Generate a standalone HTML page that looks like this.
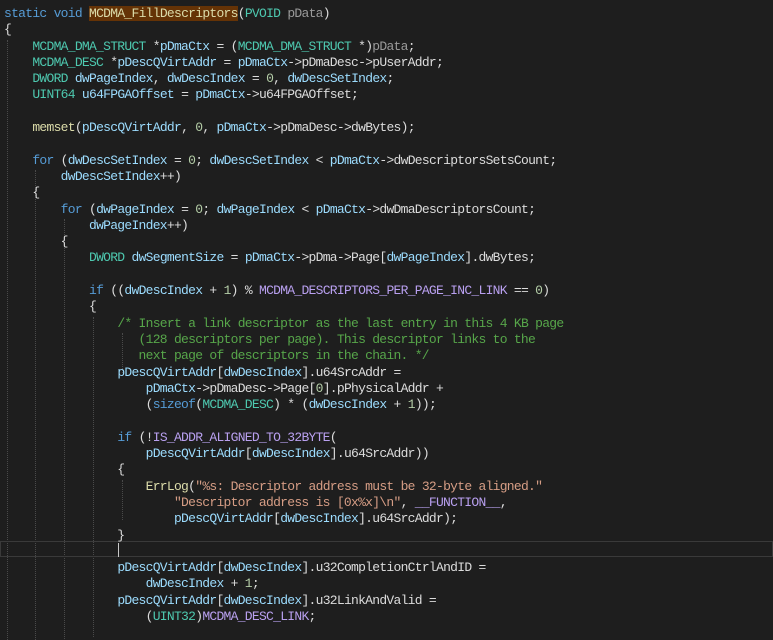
<!DOCTYPE html>
<html><head><meta charset="utf-8"><style>
body{margin:0;background:#1e1e1e;width:773px;height:638px;overflow:hidden;position:relative}
pre{margin:0;padding:6px 0 0 4px;font-family:"Liberation Mono",monospace;font-size:13px;letter-spacing:-0.72px;line-height:16.3px;color:#dcdcdc;white-space:pre;position:relative;z-index:2}
.k{color:#569cd6}.t{color:#4ec9b0}.m{color:#b9a0f0}.v{color:#9cdcfe}.p{color:#9a9a9a}.c{color:#57a64a}.s{color:#d69d85}.f{color:#dcdcaa}.n{color:#b5cea8}.h{background:#653306;color:#dcdcaa}
.g{position:absolute;width:0;border-left:1px dotted #4a4a4a;z-index:1}
.cur{position:absolute;left:0;top:541px;width:773px;height:16px;border:1px solid #3a3a3a;box-sizing:border-box;z-index:1}
.car{position:absolute;left:118px;top:543px;width:1px;height:14px;background:#c8c8c8;z-index:3}
</style></head><body>
<div class="g" style="left:7px;top:40px;height:600px"></div>
<div class="g" style="left:35px;top:170px;height:470px"></div>
<div class="g" style="left:64px;top:219px;height:420px"></div>
<div class="g" style="left:93px;top:317px;height:320px"></div>
<div class="g" style="left:122px;top:333px;height:40px"></div>
<div class="g" style="left:122px;top:480px;height:40px"></div>
<div class="cur"></div><div class="car"></div>
<pre><span class="k">static</span> <span class="k">void</span> <span class="h">MCDMA_FillDescriptors</span>(<span class="t">PVOID</span> <span class="p">pData</span>)
{
    <span class="t">MCDMA_DMA_STRUCT</span> *<span class="v">pDmaCtx</span> = (<span class="t">MCDMA_DMA_STRUCT</span> *)<span class="p">pData</span>;
    <span class="t">MCDMA_DESC</span> *<span class="v">pDescQVirtAddr</span> = <span class="v">pDmaCtx</span>-&gt;pDmaDesc-&gt;pUserAddr;
    <span class="t">DWORD</span> <span class="v">dwPageIndex</span>, <span class="v">dwDescIndex</span> = <span class="n">0</span>, <span class="v">dwDescSetIndex</span>;
    <span class="t">UINT64</span> <span class="v">u64FPGAOffset</span> = <span class="v">pDmaCtx</span>-&gt;u64FPGAOffset;

    <span class="f">memset</span>(<span class="v">pDescQVirtAddr</span>, <span class="n">0</span>, <span class="v">pDmaCtx</span>-&gt;pDmaDesc-&gt;dwBytes);

    <span class="k">for</span> (<span class="v">dwDescSetIndex</span> = <span class="n">0</span>; <span class="v">dwDescSetIndex</span> &lt; <span class="v">pDmaCtx</span>-&gt;dwDescriptorsSetsCount;
        <span class="v">dwDescSetIndex</span>++)
    {
        <span class="k">for</span> (<span class="v">dwPageIndex</span> = <span class="n">0</span>; <span class="v">dwPageIndex</span> &lt; <span class="v">pDmaCtx</span>-&gt;dwDmaDescriptorsCount;
            <span class="v">dwPageIndex</span>++)
        {
            <span class="t">DWORD</span> <span class="v">dwSegmentSize</span> = <span class="v">pDmaCtx</span>-&gt;pDma-&gt;Page[<span class="v">dwPageIndex</span>].dwBytes;

            <span class="k">if</span> ((<span class="v">dwDescIndex</span> + <span class="n">1</span>) % <span class="m">MCDMA_DESCRIPTORS_PER_PAGE_INC_LINK</span> == <span class="n">0</span>)
            {
                <span class="c">/* Insert a link descriptor as the last entry in this 4 KB page
                   (128 descriptors per page). This descriptor links to the
                   next page of descriptors in the chain. */</span>
                <span class="v">pDescQVirtAddr</span>[<span class="v">dwDescIndex</span>].u64SrcAddr =
                    <span class="v">pDmaCtx</span>-&gt;pDmaDesc-&gt;Page[<span class="n">0</span>].pPhysicalAddr +
                    (<span class="k">sizeof</span>(<span class="t">MCDMA_DESC</span>) * (<span class="v">dwDescIndex</span> + <span class="n">1</span>));

                <span class="k">if</span> (!<span class="m">IS_ADDR_ALIGNED_TO_32BYTE</span>(
                    <span class="v">pDescQVirtAddr</span>[<span class="v">dwDescIndex</span>].u64SrcAddr))
                {
                    <span class="f">ErrLog</span>(<span class="s">"%s: Descriptor address must be 32-byte aligned."</span>
                        <span class="s">"Descriptor address is [0x%x]\n"</span>, <span class="m">__FUNCTION__</span>,
                        <span class="v">pDescQVirtAddr</span>[<span class="v">dwDescIndex</span>].u64SrcAddr);
                }

                <span class="v">pDescQVirtAddr</span>[<span class="v">dwDescIndex</span>].u32CompletionCtrlAndID =
                    <span class="v">dwDescIndex</span> + <span class="n">1</span>;
                <span class="v">pDescQVirtAddr</span>[<span class="v">dwDescIndex</span>].u32LinkAndValid =
                    (<span class="t">UINT32</span>)<span class="m">MCDMA_DESC_LINK</span>;
</pre>
</body></html>
